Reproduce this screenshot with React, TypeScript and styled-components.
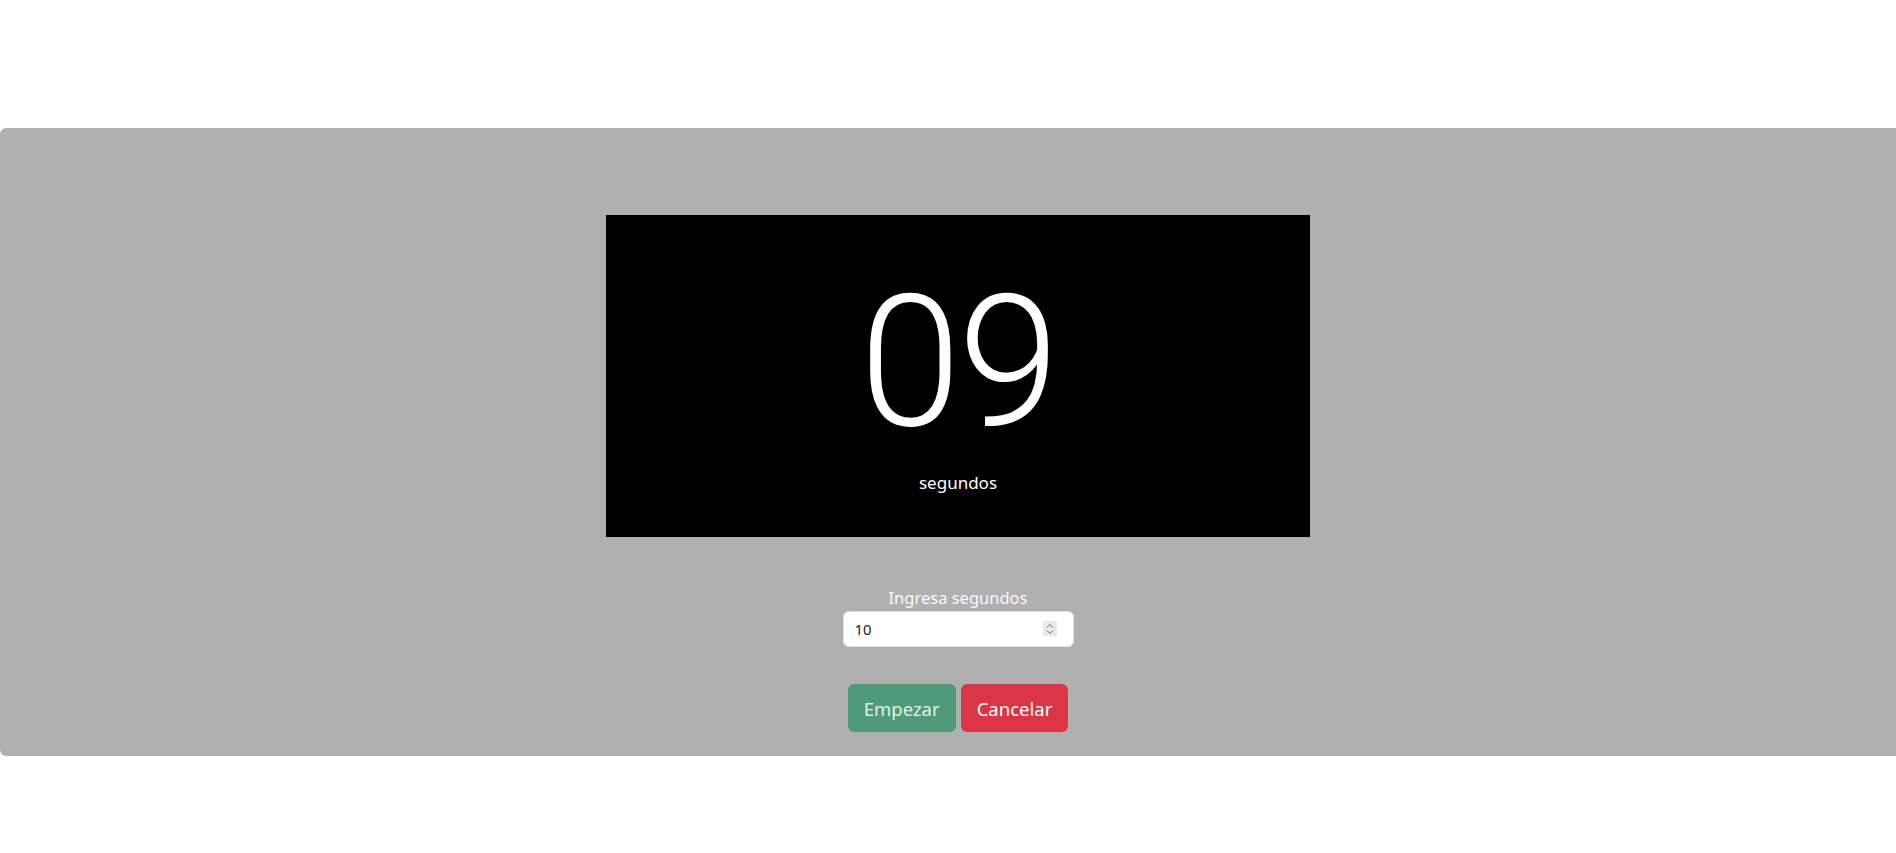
import React from "react";
import styled, { createGlobalStyle } from "styled-components";

const GlobalStyle = createGlobalStyle`
  html, body {
    margin: 0;
    padding: 0;
    background: #ffffff;
    overflow-x: hidden;
  }
  body {
    font-family: "Noto Sans", "Open Sans", sans-serif;
    color: #212529;
  }
  * { box-sizing: border-box; }
`;

const Page = styled.div`
  padding-top: 128px;
  padding-bottom: 96px;
`;

const Panel = styled.section`
  width: calc(100% + 20px);
  background: #b0b0b0;
  border-radius: 6px 0 0 6px;
  padding: 87px 0 24px;
  display: flex;
  flex-direction: column;
  align-items: center;
`;

const Display = styled.div`
  width: 704px;
  height: 322px;
  background: #000000;
  color: #ffffff;
  display: flex;
  flex-direction: column;
  align-items: center;
  padding-top: 57px;
`;

const Digits = styled.div`
  font-family: Roboto, "Noto Sans", sans-serif;
  font-size: 183px;
  line-height: 182px;
  font-weight: 350;
  letter-spacing: -3px;
`;

const Unit = styled.div`
  margin-top: 16px;
  font-size: 17px;
  line-height: 25px;
`;

const Form = styled.div`
  margin-top: 48px;
  display: flex;
  flex-direction: column;
  align-items: center;
`;

const Label = styled.label`
  font-size: 16.5px;
  line-height: 25px;
  color: #f8f9fa;
  margin-bottom: 1px;
`;

const InputWrap = styled.div`
  position: relative;
  width: 231px;
`;

const NumberInput = styled.input`
  width: 100%;
  height: 36px;
  border: 1px solid #dee2e6;
  border-radius: 6px;
  background: #ffffff;
  padding: 0 11px;
  font-family: "Noto Sans", sans-serif;
  font-size: 15px;
  color: #212529;
  outline: none;
  appearance: textfield;
  -moz-appearance: textfield;
  &::-webkit-inner-spin-button,
  &::-webkit-outer-spin-button {
    -webkit-appearance: none;
    margin: 0;
  }
`;

const Spinner = styled.span`
  position: absolute;
  right: 17px;
  top: 10px;
  width: 14px;
  height: 15px;
  background: #e9e9ed;
  display: flex;
  align-items: center;
  justify-content: center;
  pointer-events: none;
`;

const Buttons = styled.div`
  margin-top: 37px;
  display: flex;
  gap: 5px;
`;

const Button = styled.button<{ $variant: "success" | "danger"; disabled?: boolean }>`
  height: 48px;
  padding: 0 16px;
  border: none;
  border-radius: 6px;
  font-family: "Noto Sans", sans-serif;
  font-size: 18.5px;
  cursor: pointer;
  background: ${(p) => (p.$variant === "success" ? "#4f9a78" : "#dc3545")};
  color: ${(p) => (p.$variant === "success" ? "#e2f0e9" : "#ffffff")};
`;

export default function App() {
  return (
    <>
      <GlobalStyle />
      <Page>
        <Panel>
          <Display>
            <Digits>09</Digits>
            <Unit>segundos</Unit>
          </Display>
          <Form>
            <Label htmlFor="segundos">Ingresa segundos</Label>
            <InputWrap>
              <NumberInput id="segundos" type="number" defaultValue={10} />
              <Spinner>
                <svg width="8" height="12" viewBox="0 0 8 12" fill="none" stroke="#6b6b6b" strokeWidth="1">
                  <path d="M1 4.5 L4 1.5 L7 4.5" />
                  <path d="M1 7.5 L4 10.5 L7 7.5" />
                </svg>
              </Spinner>
            </InputWrap>
          </Form>
          <Buttons>
            <Button $variant="success" disabled>
              Empezar
            </Button>
            <Button $variant="danger">Cancelar</Button>
          </Buttons>
        </Panel>
      </Page>
    </>
  );
}
